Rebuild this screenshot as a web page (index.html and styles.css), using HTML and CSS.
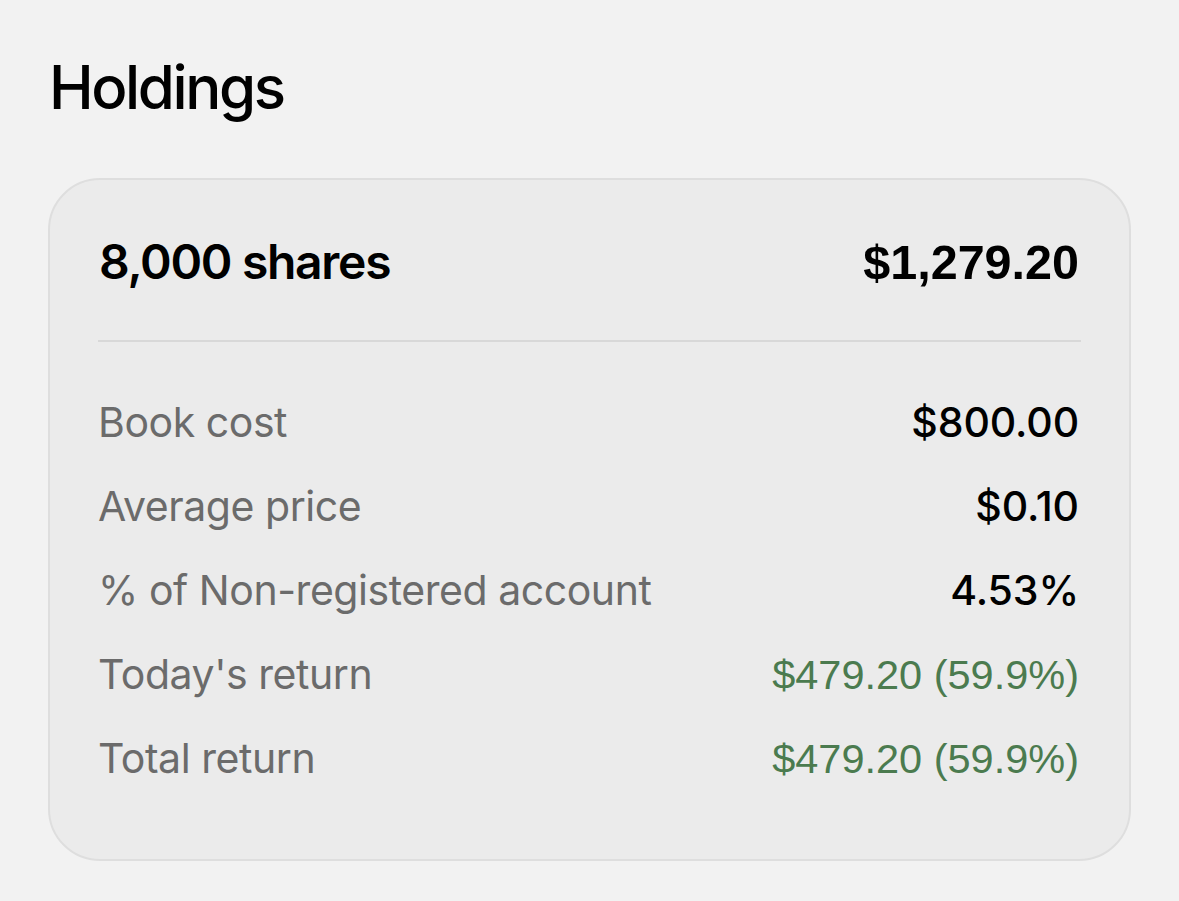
FILE: index.html
```html
<!DOCTYPE html>
<html>
<head>
<meta charset="utf-8">
<link rel="stylesheet" href="styles.css">
</head>
<body>
<h1 class="title">Holdings</h1>
<section class="card">
  <div class="head">
    <span class="shares">8,000 shares</span>
    <span class="total">$1,279.20</span>
  </div>
  <div class="divider"></div>
  <div class="rows">
    <div class="row"><span class="label">Book cost</span><span class="value">$800.00</span></div>
    <div class="row"><span class="label">Average price</span><span class="value">$0.10</span></div>
    <div class="row"><span class="label">% of Non-registered account</span><span class="value">4.53%</span></div>
    <div class="row"><span class="label">Today's return</span><span class="value gain">$479.20 (59.9%)</span></div>
    <div class="row"><span class="label">Total return</span><span class="value gain">$479.20 (59.9%)</span></div>
  </div>
</section>
</body>
</html>
```
FILE: styles.css
```css
html, body {
  margin: 0;
  padding: 0;
  background: #f2f2f2;
}
body {
  font-family: Inter, "Noto Sans", sans-serif;
  color: #000;
  padding: 0 48px;
}
.title {
  margin: 49px 0 0 1px;
  font-size: 60px;
  line-height: 76px;
  font-weight: 500;
  letter-spacing: -2.4px;
}
.card {
  margin-top: 53px;
  background: #ebebeb;
  border: 2px solid #dedede;
  border-radius: 52px;
  padding: 52px 48px 59px;
}
.head {
  display: flex;
  justify-content: space-between;
  align-items: baseline;
  padding: 0 2px 0 1px;
  height: 60px;
  line-height: 60px;
}
.shares {
  font-size: 48px;
  font-weight: 600;
  letter-spacing: -1.3px;
}
.total {
  font-family: "Liberation Sans", Arial, sans-serif;
  font-size: 48.5px;
  font-weight: 700;
}
.divider {
  margin-top: 48px;
  height: 2px;
  background: #d8d8d8;
}
.rows {
  margin-top: 38px;
  padding: 0 2px 0 0;
}
.row {
  display: flex;
  justify-content: space-between;
  align-items: baseline;
  height: 84px;
  line-height: 84px;
  font-size: 41px;
}
.label {
  color: #6b6b6b;
  font-weight: 400;
  letter-spacing: -0.45px;
}
.value {
  color: #000;
  font-weight: 500;
  letter-spacing: -0.1px;
}
.gain {
  font-family: "Liberation Sans", Arial, sans-serif;
  font-size: 41.5px;
  color: #4b7b4f;
  font-weight: 400;
  letter-spacing: 0;
}
```
